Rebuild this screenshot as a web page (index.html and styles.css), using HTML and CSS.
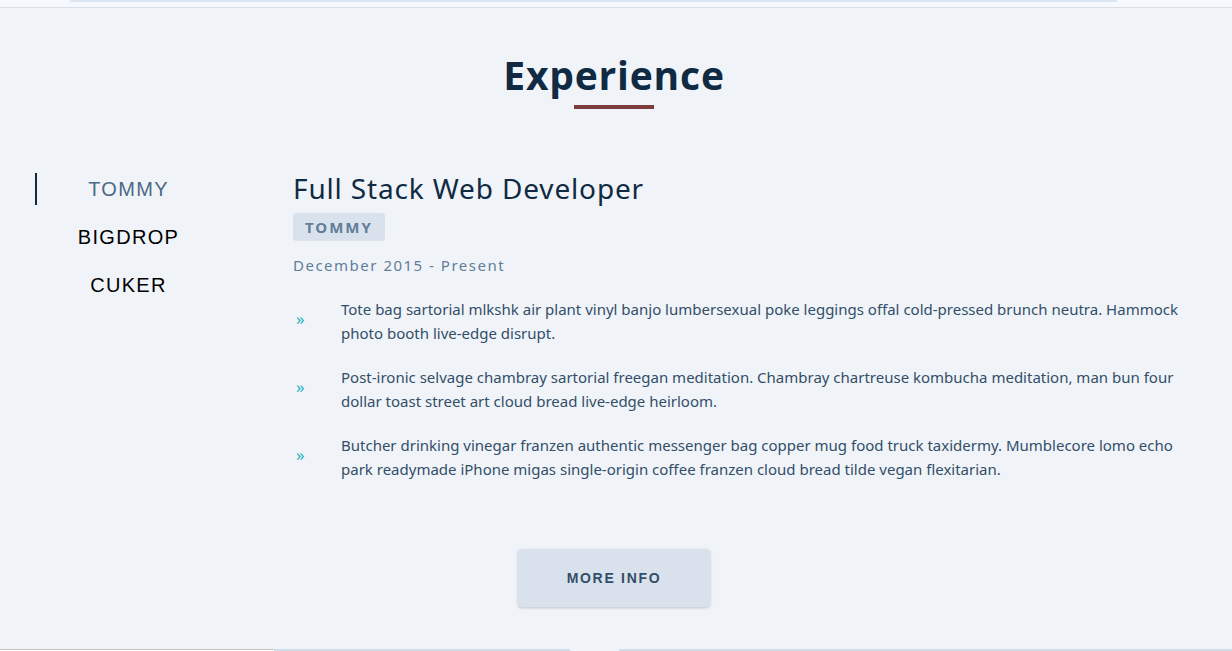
FILE: index.html
```html
<!DOCTYPE html>
<html lang="en">
<head>
<meta charset="utf-8">
<title>Experience</title>
<link rel="stylesheet" href="styles.css">
</head>
<body>
<div class="topbar"><div class="topbar-inner"></div></div>
<section class="experience">
  <div class="title">
    <h2>Experience</h2>
    <div class="underline"></div>
  </div>
  <div class="jobs">
    <nav class="job-tabs">
      <button class="job-tab active">TOMMY</button>
      <button class="job-tab">BIGDROP</button>
      <button class="job-tab">CUKER</button>
    </nav>
    <article class="job-info">
      <h3>Full Stack Web Developer</h3>
      <h4 class="company">TOMMY</h4>
      <p class="job-date">December 2015 - Present</p>
      <div class="duty">
        <span class="duty-icon">&raquo;</span>
        <p>Tote bag sartorial mlkshk air plant vinyl banjo lumbersexual poke leggings offal cold-pressed brunch neutra. Hammock photo booth live-edge disrupt.</p>
      </div>
      <div class="duty">
        <span class="duty-icon">&raquo;</span>
        <p>Post-ironic selvage chambray sartorial freegan meditation. Chambray chartreuse kombucha meditation, man bun four dollar toast street art cloud bread live-edge heirloom.</p>
      </div>
      <div class="duty">
        <span class="duty-icon">&raquo;</span>
        <p>Butcher drinking vinegar franzen authentic messenger bag copper mug food truck taxidermy. Mumblecore lomo echo park readymade iPhone migas single-origin coffee franzen cloud bread tilde vegan flexitarian.</p>
      </div>
    </article>
  </div>
  <div class="more">
    <button class="btn">MORE INFO</button>
  </div>
</section>
<div class="bottombar">
  <div class="seg seg-a"></div>
  <div class="seg seg-b"></div>
  <div class="seg seg-c"></div>
  <div class="seg seg-d"></div>
</div>
</body>
</html>
```
FILE: styles.css
```css
* { box-sizing: border-box; }
html, body { margin: 0; padding: 0; }
body {
  background: #f0f4f8;
  font-family: "Noto Sans", "Open Sans", sans-serif;
  color: #102a43;
  height: 651px;
  overflow: hidden;
  display: flex;
  flex-direction: column;
}
.topbar {
  height: 8px;
  background: #f5f9fd;
  border-bottom: 1px solid #d9dfe5;
  padding: 0 115px 0 70px;
}
.topbar-inner {
  height: 2px;
  background: #dbe6f1;
}
.experience {
  flex: 1;
  padding: 41px 4px 0 0;
}
.title { text-align: center; }
.title h2 {
  margin: 0;
  font-family: "Open Sans", sans-serif;
  font-weight: 700;
  font-size: 39px;
  line-height: 52px;
  letter-spacing: 0.8px;
  color: #102a43;
}
.underline {
  width: 80px;
  height: 4px;
  background: #7b3a3b;
  margin: 4px auto 0;
}
.jobs {
  display: grid;
  grid-template-columns: 185px 1fr;
  column-gap: 73px;
  padding: 64px 36px 0 35px;
}
.job-tabs {
  display: flex;
  flex-direction: column;
  gap: 16px;
}
.job-tab {
  background: transparent;
  border: 0;
  border-left: 2px solid transparent;
  height: 32px;
  padding: 0;
  font-family: "Liberation Sans", Arial, sans-serif;
  font-size: 20px;
  letter-spacing: 1.3px;
  color: #000;
  text-align: center;
  cursor: pointer;
}
.job-tab.active {
  border-left-color: #102a43;
  color: #4d6985;
}
.job-info h3 {
  margin: -2px 0 0;
  font-weight: 400;
  font-size: 28px;
  line-height: 34px;
  letter-spacing: 0.85px;
  color: #102a43;
}
.company {
  display: inline-block;
  margin: 8px 0 0;
  padding: 0 12px;
  height: 28px;
  line-height: 28px;
  background: #d9e2ec;
  border-radius: 3px;
  font-size: 15px;
  font-weight: 700;
  letter-spacing: 2px;
  color: #617d98;
}
.job-date {
  margin: 14px 0 0;
  font-size: 15px;
  line-height: 20px;
  letter-spacing: 1.5px;
  color: #627d98;
}
.duty {
  display: grid;
  grid-template-columns: 48px 1fr;
  align-items: center;
  margin-top: 20px;
}
.duty:first-of-type { margin-top: 22px; }
.duty-icon {
  color: #2cb1bc;
  font-size: 17px;
  padding: 0 0 5px 3px;
  line-height: 1;
}
.duty p {
  margin: 0;
  font-size: 15px;
  line-height: 24px;
  color: #334e68;
}
.more {
  display: flex;
  justify-content: center;
  padding-top: 68px;
}
.btn {
  width: 192px;
  height: 58px;
  border: 0;
  border-radius: 4px;
  background: #d9e2ec;
  box-shadow: 0 1px 3px rgba(0,0,0,0.2);
  font-family: "Liberation Sans", Arial, sans-serif;
  font-weight: 700;
  font-size: 14px;
  letter-spacing: 1.7px;
  color: #334e68;
}
.bottombar {
  display: flex;
  height: 2px;
  flex: none;
}
.seg-a { width: 274px; border-top: 1px solid #c4c4c4; background: #fff; }
.seg-b { width: 296px; background: #d0dde8; }
.seg-c { width: 49px; background: #f0f4f8; }
.seg-d { flex: 1; background: #d0dde8; }
```
